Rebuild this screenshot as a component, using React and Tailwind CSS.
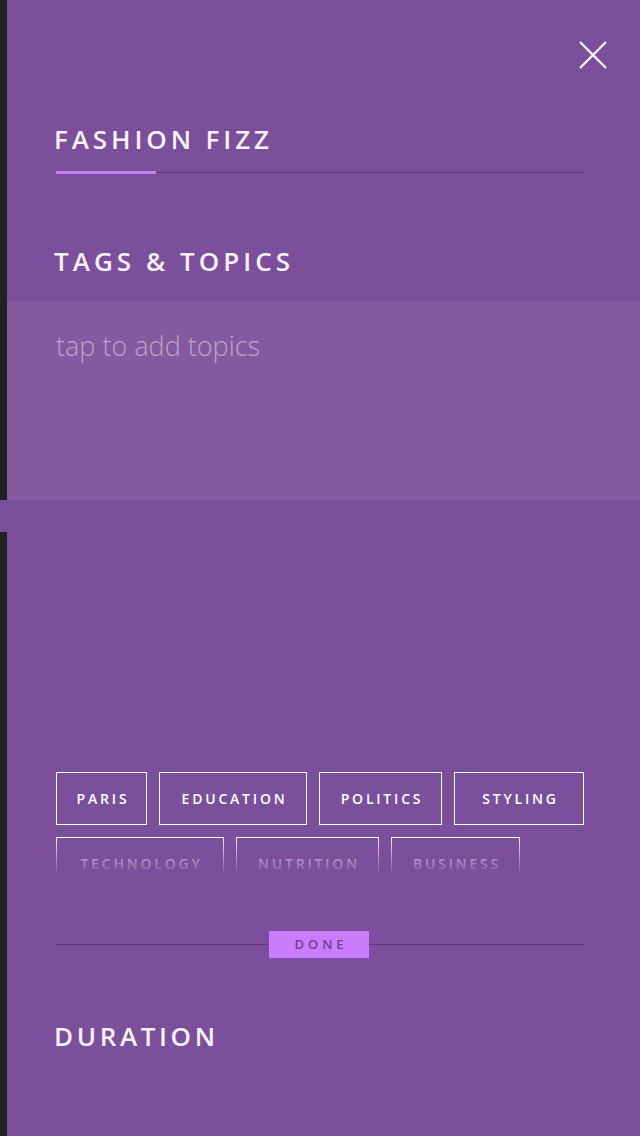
import React from 'react';

const font = { fontFamily: '"Open Sans", "Liberation Sans", sans-serif' };

const row1 = [
  ['PARIS', 'w-[91px]'],
  ['EDUCATION', 'w-[148px]'],
  ['POLITICS', 'w-[123px]'],
  ['STYLING', 'w-[130px]'],
];
const row2 = [
  ['TECHNOLOGY', 'w-[168px]'],
  ['NUTRITION', 'w-[143px]'],
  ['BUSINESS', 'w-[129px]'],
];

function Tag({ label, w }) {
  return (
    <div className={`${w} h-[53px] border border-white flex items-center justify-center pl-[3px] text-[14px] font-semibold tracking-[0.2em] text-white`}>
      {label}
    </div>
  );
}

export default function App() {
  return (
    <div className="w-[640px] h-[1136px] overflow-hidden bg-[#222222] pl-[7px]" style={font}>
      <div className="h-full bg-[#7b4f9b] flex flex-col">
        {/* close */}
        <div className="flex justify-end pt-[41px] pr-[33px]">
          <svg width="28" height="28" viewBox="0 0 28 28">
            <path d="M1 1 L27 27 M27 1 L1 27" stroke="#fff" strokeWidth="2.2" />
          </svg>
        </div>

        <h1 className="mt-[54px] ml-[47px] text-[26px] leading-[32px] font-semibold tracking-[0.15em] text-[#f6f2f8]">
          FASHION FIZZ
        </h1>
        <div className="mt-[16px] ml-[49px] mr-[56px] h-[3px] flex items-center">
          <div className="w-[100px] h-[3px] bg-[#c87dfb]" />
          <div className="flex-1 h-px bg-[#603b7c]" />
        </div>

        <h2 className="mt-[71px] ml-[47px] text-[26px] leading-[32px] font-semibold tracking-[0.155em] text-[#f6f2f8]">
          TAGS &amp; TOPICS
        </h2>

        <div className="mt-[25px] h-[198px] bg-[#835a9f] pl-[49px] pt-[26px]">
          <p className="text-[27px] leading-[36px] font-light text-[#baa3cb]">tap to add topics</p>
        </div>
        <div className="-ml-[7px] h-[32px] bg-[#7b4f9b]" />

        {/* tags */}
        <div className="mt-[240px] ml-[49px] mr-[56px] relative h-[104px] overflow-hidden">
          <div className="flex flex-wrap gap-[12px]">
            {row1.map(([l, w]) => <Tag key={l} label={l} w={w} />)}
          </div>
          <div className="flex gap-[12px] mt-[12px]">
            {row2.map(([l, w]) => <Tag key={l} label={l} w={w} />)}
          </div>
          <div className="absolute left-0 right-0 top-[66px] h-[38px] bg-gradient-to-b from-[#7b4f9b]/10 to-[#7b4f9b]" />
        </div>

        {/* done */}
        <div className="mt-[55px] ml-[49px] mr-[56px] h-[27px] relative flex items-center justify-center">
          <div className="absolute left-0 right-0 top-[13px] h-px bg-[#603b7c]" />
          <div className="relative -ml-[2px] w-[100px] h-[27px] bg-[#c97dfc] flex items-center justify-center pl-[4px] text-[13px] font-semibold tracking-[0.3em] text-[#6e4290]">
            DONE
          </div>
        </div>

        <h2 className="mt-[62px] ml-[47px] text-[26px] leading-[32px] font-semibold tracking-[0.14em] text-[#f6f2f8]">
          DURATION
        </h2>
      </div>
    </div>
  );
}
